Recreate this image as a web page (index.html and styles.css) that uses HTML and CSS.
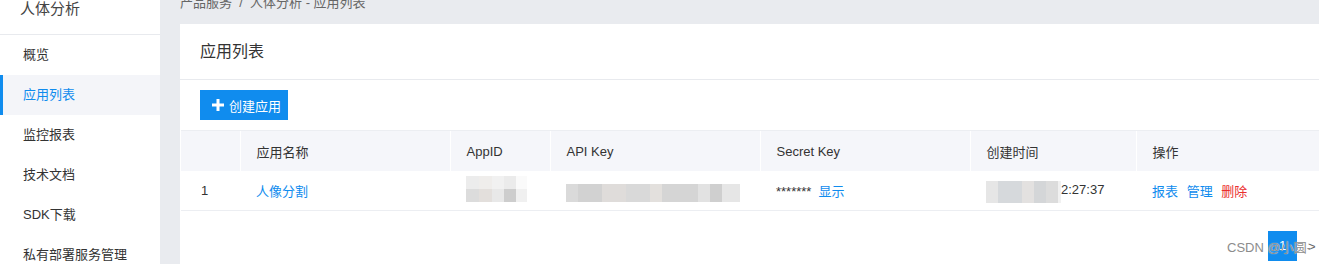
FILE: index.html
```html
<!DOCTYPE html>
<html lang="zh-CN">
<head>
    <meta charset="UTF-8" />
    <meta name="viewport" content="width=device-width, initial-scale=1.0" />
    <title>应用列表 - 人体分析</title>
    <link rel="stylesheet" href="styles.css">
</head>
<body>
    <div class="layout">
        <aside class="sidebar">
            <div class="side-title">人体分析</div>
            <ul class="side-menu">
                <li>概览</li>
                <li class="active">应用列表</li>
                <li>监控报表</li>
                <li>技术文档</li>
                <li>SDK下载</li>
                <li>私有部署服务管理</li>
            </ul>
        </aside>

        <main class="main">
            <div class="crumb">产品服务 &nbsp;/&nbsp; 人体分析 - 应用列表</div>

            <section class="card">
                <div class="card-head">应用列表</div>

                <div class="toolbar">
                    <button class="btn-create" type="button">
                        <svg width="12" height="12" viewBox="0 0 12 12">
                            <path d="M6 0v12M0 6h12" stroke="#fff" stroke-width="3" />
                        </svg>
                        创建应用
                    </button>
                </div>

                <table class="app-table">
                    <colgroup>
                        <col style="width: 59px">
                        <col style="width: 210px">
                        <col style="width: 100px">
                        <col style="width: 210px">
                        <col style="width: 210px">
                        <col style="width: 166px">
                        <col style="width: 185px">
                    </colgroup>
                    <thead>
                        <tr>
                            <th></th>
                            <th>应用名称</th>
                            <th>AppID</th>
                            <th>API Key</th>
                            <th>Secret Key</th>
                            <th>创建时间</th>
                            <th>操作</th>
                        </tr>
                    </thead>
                    <tbody>
                        <tr>
                            <td class="idx">1</td>
                            <td><a class="link">人像分割</a></td>
                            <td><span class="mosaic mosaic-id"></span></td>
                            <td><span class="mosaic mosaic-key"></span></td>
                            <td><span class="stars">*******</span><a class="link">显示</a></td>
                            <td class="time"><span class="mosaic mosaic-date"></span>2:27:37</td>
                            <td>
                                <a class="link op">报表</a>
                                <a class="link op">管理</a>
                                <a class="link op danger">删除</a>
                            </td>
                        </tr>
                    </tbody>
                </table>

                <div class="pager">
                    <span class="page-cur">1</span>
                    <span class="page-next">&gt;</span>
                </div>
            </section>
        </main>
    </div>

    <div class="watermark">CSDN @小圆-</div>
</body>
</html>
```

FILE: styles.css
```css
html, body {
    height: 100%;
}
body {
    margin: 0;
    font-family: "Liberation Sans", "Noto Sans CJK SC", sans-serif;
    font-size: 13px;
    color: #333;
    background: #e9ebef;
    overflow: hidden;
}
.layout {
    display: flex;
    height: 100%;
}
.sidebar {
    width: 160px;
    flex-shrink: 0;
    background: #fff;
}
.side-title {
    height: 34px;
    padding-left: 20px;
    font-size: 15px;
    line-height: 18px;
    color: #444;
    border-bottom: 1px solid #e8eaee;
}
.side-menu {
    list-style: none;
    margin: 0;
    padding: 0;
}
.side-menu li {
    height: 40px;
    line-height: 40px;
    padding-left: 23px;
    white-space: nowrap;
}
.side-menu li.active {
    background: #f4f5f9;
    color: #108cee;
    box-shadow: inset 3px 0 0 #108cee;
}
.main {
    flex: 1;
    padding-left: 20px;
    min-width: 0;
}
.crumb {
    height: 24px;
    line-height: 6px;
    color: #666;
    white-space: nowrap;
}
.card {
    width: 1200px;
    background: #fff;
    height: 240px;
}
.card-head {
    height: 56px;
    padding-left: 20px;
    font-size: 16px;
    line-height: 55px;
    border-bottom: 1px solid #e8eaee;
    box-sizing: border-box;
}
.toolbar {
    padding: 10px 20px;
}
.btn-create {
    display: flex;
    align-items: center;
    gap: 5px;
    height: 30px;
    width: 88px;
    padding: 0 0 0 12px;
    border: none;
    background: #108cee;
    color: #fff;
    font-family: inherit;
    font-size: 13px;
    cursor: pointer;
}
.app-table {
    table-layout: fixed;
    border-collapse: collapse;
    width: 1140px;
    margin-left: 1px;
}
.app-table th {
    height: 40px;
    padding: 0 0 0 16px;
    text-align: left;
    font-weight: normal;
    background: #f5f6fa;
    border-top: 1px solid #eceef2;
    border-left: 1px solid #fff;
}
.app-table th:first-child {
    border-left: none;
}
.app-table td {
    height: 39px;
    padding: 0 0 0 16px;
    border-bottom: 1px solid #eceef2;
    white-space: nowrap;
}
.app-table td.idx {
    padding-left: 20px;
}
.link {
    color: #108cee;
    text-decoration: none;
    cursor: pointer;
}
.op {
    margin-right: 5px;
}
.danger {
    color: #ea2e2e;
}
.stars {
    margin-right: 7px;
}
.mosaic {
    display: inline-block;
    vertical-align: middle;
}
.mosaic-id {
    width: 61px;
    height: 26px;
    margin-top: -4px;
    background:
        linear-gradient(to right, #dcdcdc 0 13px, #e3dfdc 13px 26px, #e8e8e8 26px 38px, #cdcdcd 38px 50px, #f0f0f0 50px 61px) 0 13px / 61px 13px no-repeat,
        linear-gradient(to right, #ececec 0 13px, #efedeb 13px 26px, #f1f1f1 26px 38px, #ebebeb 38px 50px, #fafafa 50px 61px) 0 0 / 61px 13px no-repeat;
}
.mosaic-key {
    width: 174px;
    height: 18px;
    margin-top: 4px;
    background: linear-gradient(to right,
        #dadada 0 12px, #d2d2d2 12px 36px, #dfdcda 36px 60px, #d9d9d9 60px 84px,
        #e3e0dd 84px 96px, #d5d5d5 96px 132px, #e2e2e2 132px 144px, #cfcfcf 144px 156px, #e6e6e6 156px 174px);
}
.mosaic-date {
    width: 75px;
    height: 22px;
    margin-top: 2px;
    background: linear-gradient(to right,
        #e6e6e6 0 12px, #d6d9dc 12px 36px, #e3e1e0 36px 48px, #d4d6d8 48px 60px, #dcdcdc 60px 72px, #f1f1f1 72px 75px);
}
.time {
    color: #333;
}
.pager {
    display: flex;
    align-items: center;
    margin-top: 20px;
    padding-left: 1088px;
}
.page-cur {
    width: 29px;
    height: 30px;
    line-height: 30px;
    text-align: center;
    background: #108cee;
    color: #fff;
}
.page-next {
    margin-left: 11px;
    color: #666;
}
.watermark {
    position: absolute;
    left: 1227px;
    top: 240px;
    font-size: 13px;
    line-height: 16px;
    color: #8c8c8c;
    text-shadow: 0 0 1px #fff;
    white-space: nowrap;
}
```
